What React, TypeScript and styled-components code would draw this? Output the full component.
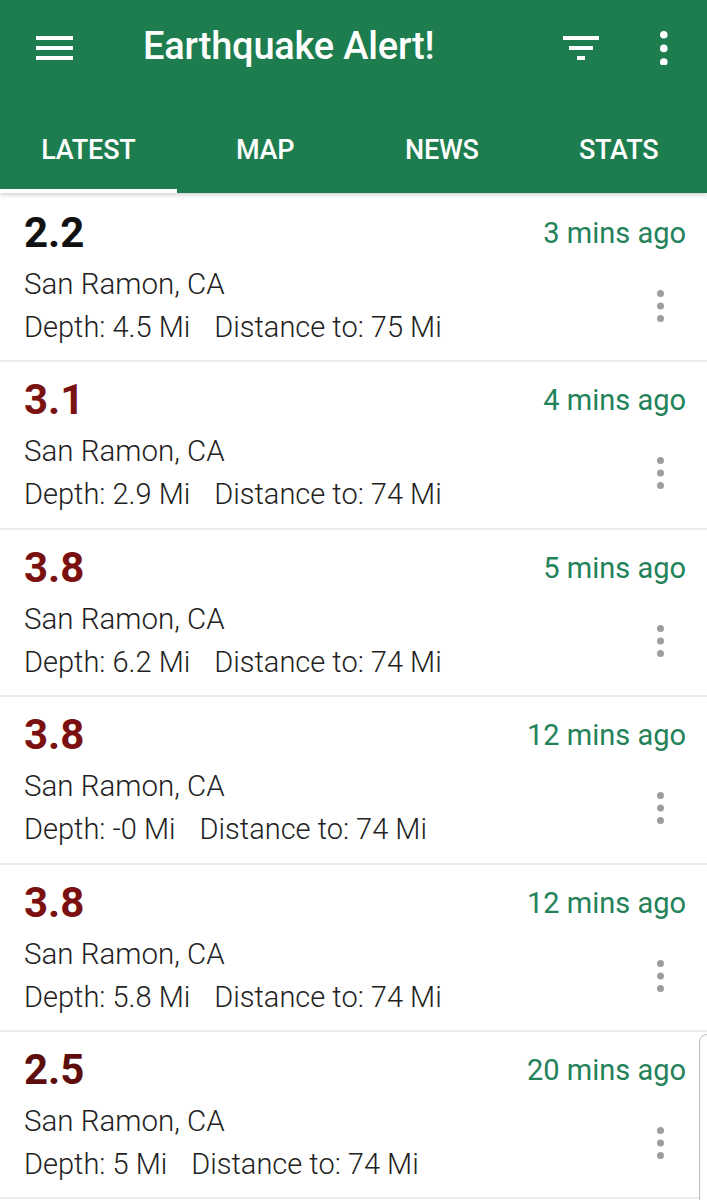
import React from 'react';
import styled, { createGlobalStyle } from 'styled-components';

const GlobalStyle = createGlobalStyle`
  html, body {
    margin: 0;
    padding: 0;
    background: #ffffff;
    font-family: Roboto, "Noto Sans", "Liberation Sans", sans-serif;
  }
  * {
    box-sizing: border-box;
  }
`;

const GREEN = '#1e7d4e';

const Page = styled.div`
  width: 707px;
  min-height: 1200px;
  overflow: hidden;
  position: relative;
`;

const Header = styled.header`
  background: ${GREEN};
  color: #fff;
  box-shadow: 0 2px 4px rgba(0, 0, 0, 0.18);
  position: relative;
  z-index: 1;
`;

const Toolbar = styled.div`
  height: 96px;
  display: flex;
  align-items: center;
  padding: 0 0 0 36px;
`;

const IconButton = styled.button`
  background: none;
  border: 0;
  padding: 0;
  display: flex;
  align-items: center;
  justify-content: center;
  color: #fff;
  cursor: pointer;
`;

const Title = styled.h1`
  margin: 0 0 0 70px;
  flex: 1;
  font-size: 38px;
  font-weight: 500;
  letter-spacing: -0.2px;
  line-height: 1;
  padding-bottom: 4px;
`;

const Actions = styled.div`
  display: flex;
  align-items: center;
  gap: 61px;
  padding-right: 39px;
`;

const TabBar = styled.nav`
  height: 97px;
  display: grid;
  grid-template-columns: repeat(4, 1fr);
`;

const Tab = styled.div<{ $active?: boolean }>`
  display: flex;
  align-items: center;
  justify-content: center;
  padding-top: 14px;
  font-size: 27px;
  font-weight: 500;
  letter-spacing: -0.2px;
  color: #fff;
  border-bottom: 4px solid ${({ $active }) => ($active ? '#ffffff' : 'transparent')};
`;

const List = styled.ul`
  list-style: none;
  margin: 0;
  padding: 2px 0 0;
  position: relative;
`;

const Row = styled.li`
  height: 167.4px;
  display: flex;
  justify-content: space-between;
  padding: 14px 21px 0 24px;
  border-bottom: 2px solid #ececec;
`;

const Info = styled.div`
  display: flex;
  flex-direction: column;
`;

const Magnitude = styled.div<{ $color: string }>`
  font-size: 42px;
  font-weight: 700;
  line-height: 48px;
  color: ${({ $color }) => $color};
`;

const Location = styled.div`
  margin-top: 6px;
  font-size: 29.5px;
  font-weight: 300;
  line-height: 43px;
  color: #222;
`;

const Details = styled.div`
  display: flex;
  gap: 24px;
  font-size: 29px;
  font-weight: 300;
  line-height: 43px;
  color: #222;
`;

const Side = styled.div`
  display: flex;
  flex-direction: column;
  align-items: flex-end;
`;

const Time = styled.div`
  font-size: 29px;
  font-weight: 400;
  line-height: 48px;
  color: #23825a;
`;

const RowMenu = styled.div`
  margin: 33px 22px 0 0;
  display: flex;
`;

const ScrollThumb = styled.div`
  position: absolute;
  left: 699px;
  top: 841px;
  width: 20px;
  height: 200px;
  border: 1px solid #bdbdbd;
  border-radius: 8px;
  background: #fff;
`;

const MenuIcon = () => (
  <svg width="37" height="24" viewBox="0 0 37 24">
    <rect x="0" y="0" width="37" height="4" fill="#fff" />
    <rect x="0" y="10" width="37" height="4" fill="#fff" />
    <rect x="0" y="20" width="37" height="4" fill="#fff" />
  </svg>
);

const FilterIcon = () => (
  <svg width="36" height="24" viewBox="0 0 36 24">
    <rect x="0" y="0" width="36" height="4" fill="#fff" />
    <rect x="6" y="10" width="24" height="4" fill="#fff" />
    <rect x="14" y="20" width="8" height="4" fill="#fff" />
  </svg>
);

const KebabIcon = ({ color, r, gap }: { color: string; r: number; gap: number }) => (
  <svg width={r * 2} height={r * 2 * 3 + gap * 2} viewBox={`0 0 ${r * 2} ${r * 6 + gap * 2}`}>
    {[0, 1, 2].map((i) => (
      <circle key={i} cx={r} cy={r + i * (2 * r + gap)} r={r} fill={color} />
    ))}
  </svg>
);

type Quake = {
  mag: string;
  color: string;
  time: string;
  depth: string;
  distance: string;
};

const quakes: Quake[] = [
  { mag: '2.2', color: '#111111', time: '3 mins ago', depth: '4.5', distance: '75' },
  { mag: '3.1', color: '#7a1212', time: '4 mins ago', depth: '2.9', distance: '74' },
  { mag: '3.8', color: '#7b1010', time: '5 mins ago', depth: '6.2', distance: '74' },
  { mag: '3.8', color: '#7b1010', time: '12 mins ago', depth: '-0', distance: '74' },
  { mag: '3.8', color: '#7b1010', time: '12 mins ago', depth: '5.8', distance: '74' },
  { mag: '2.5', color: '#5e0d0d', time: '20 mins ago', depth: '5', distance: '74' },
];

const tabs = ['LATEST', 'MAP', 'NEWS', 'STATS'];

export default function App() {
  return (
    <Page>
      <GlobalStyle />
      <Header>
        <Toolbar>
          <IconButton aria-label="Menu">
            <MenuIcon />
          </IconButton>
          <Title>Earthquake Alert!</Title>
          <Actions>
            <IconButton aria-label="Filter">
              <FilterIcon />
            </IconButton>
            <IconButton aria-label="More">
              <KebabIcon color="#fff" r={3.8} gap={6} />
            </IconButton>
          </Actions>
        </Toolbar>
        <TabBar>
          {tabs.map((t, i) => (
            <Tab key={t} $active={i === 0}>
              {t}
            </Tab>
          ))}
        </TabBar>
      </Header>
      <List>
        {quakes.map((q, i) => (
          <Row key={i}>
            <Info>
              <Magnitude $color={q.color}>{q.mag}</Magnitude>
              <Location>San Ramon, CA</Location>
              <Details>
                <span>Depth: {q.depth} Mi</span>
                <span>Distance to: {q.distance} Mi</span>
              </Details>
            </Info>
            <Side>
              <Time>{q.time}</Time>
              <RowMenu>
                <KebabIcon color="#9e9e9e" r={3.5} gap={5.5} />
              </RowMenu>
            </Side>
          </Row>
        ))}
        <ScrollThumb />
      </List>
    </Page>
  );
}
